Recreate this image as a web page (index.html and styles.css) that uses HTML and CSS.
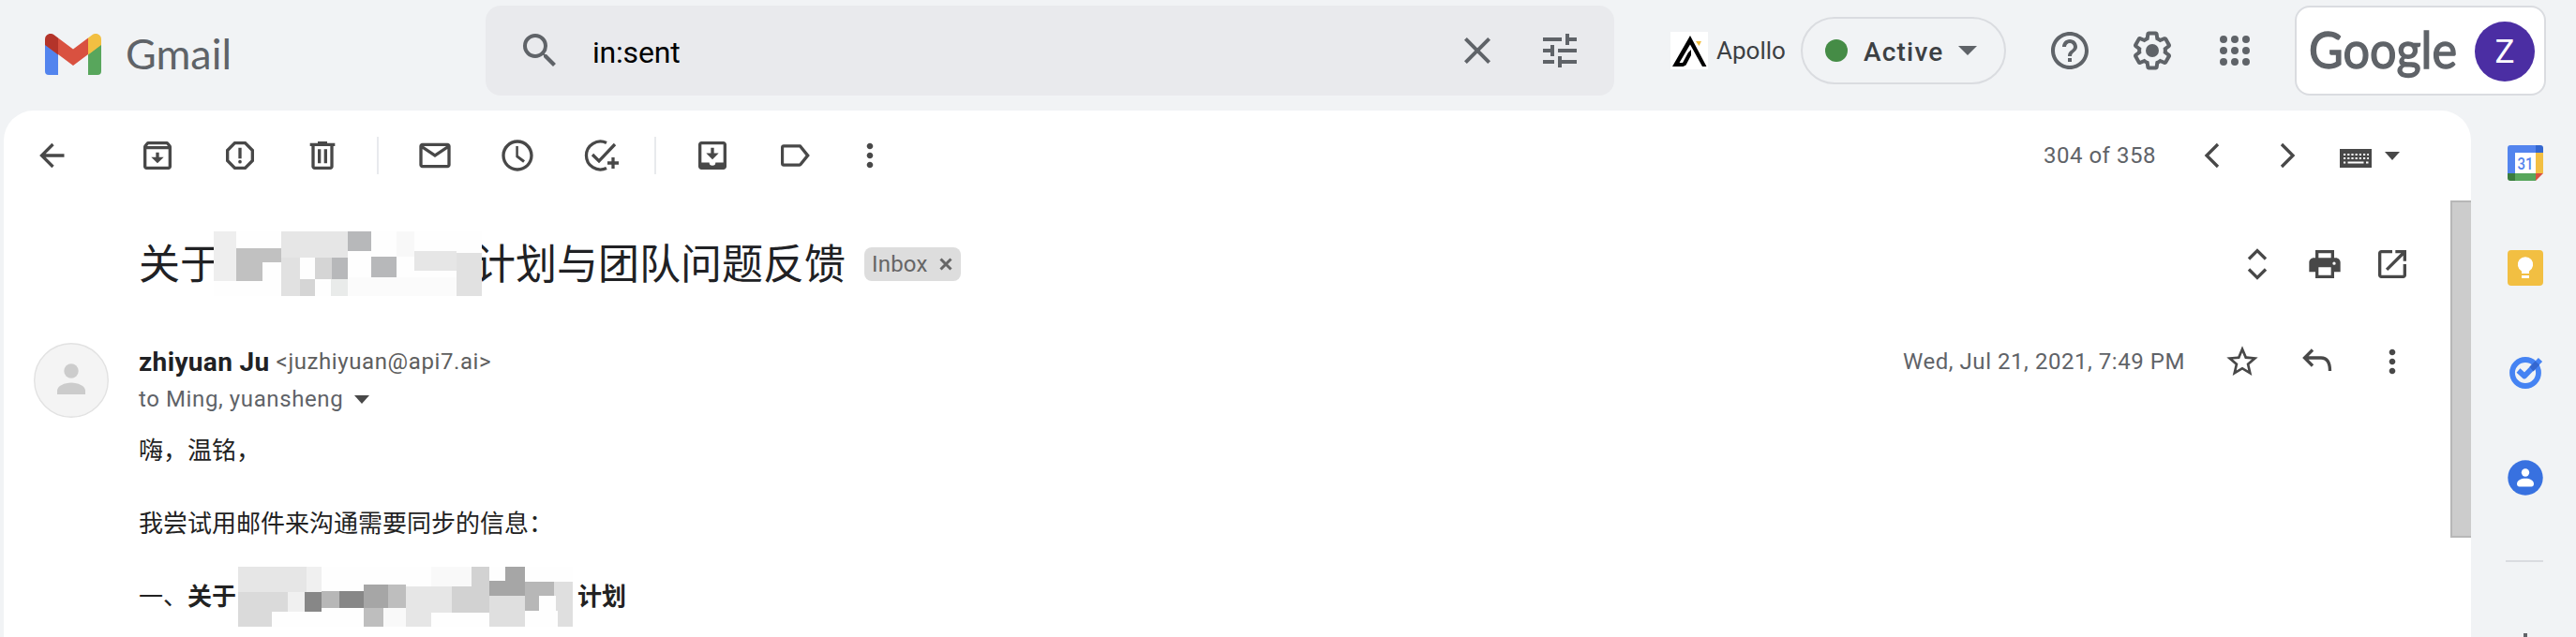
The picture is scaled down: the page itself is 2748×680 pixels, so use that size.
FILE: index.html
```html
<!DOCTYPE html>
<html lang="en">
<head>
<meta charset="utf-8">
<title>Gmail</title>
<link rel="stylesheet" href="styles.css">
</head>
<body>
<header class="header">
  <svg class="gmail-mark" viewBox="0 0 60 44">
    <path fill="#5384ee" d="M0 11L14 22V44H4a4 4 0 0 1-4-4z"/>
    <path fill="#58a65c" d="M60 11L46 22V44h10a4 4 0 0 0 4-4z"/>
    <path fill="#b4342a" d="M0 12V6C0 .8 5.500-1.800 10 1.500l4 3V22.500z"/>
    <path fill="#f2bf42" d="M60 12V6C60 .8 54.500-1.800 50 1.500l-4 3V22.500z"/>
    <path fill="#d95140" d="M14 4.500l16 12 16-12v17.500L30 34 14 22z"/>
  </svg>
  <svg class="gmail-word" viewBox="0 0 120 60"><text x="1" y="46" textLength="113" lengthAdjust="spacingAndGlyphs">Gmail</text></svg>
  <div class="search">
    <svg class="i48" viewBox="0 0 24 24"><path d="M15.500 14h-.79l-.28-.27A6.470 6.470 0 0 0 16 9.500 6.500 6.500 0 1 0 9.500 16c1.610 0 3.090-.59 4.230-1.570l.27.28v.79l5 4.990L20.490 19l-4.990-5zm-6 0C7.010 14 5 11.990 5 9.500S7.010 5 9.500 5 14 7.010 14 9.500 11.990 14 9.500 14z"/></svg>
    <span class="query">in:sent</span>
    <svg class="i48" viewBox="0 0 24 24"><path d="M19 6.410L17.590 5 12 10.590 6.410 5 5 6.410 10.590 12 5 17.590 6.410 19 12 13.410 17.590 19 19 17.590 13.410 12z"/></svg>
    <svg class="i48 tune" viewBox="0 0 24 24"><path d="M3 17v2h6v-2H3zM3 5v2h10V5H3zm10 16v-2h8v-2h-8v-2h-2v6h2zM7 9v2H3v2h4v2h2V9H7zm14 4v-2H11v2h10zm-6-4h2V7h4V5h-4V3h-2v6z"/></svg>
  </div>
  <svg class="apollo-mark" viewBox="0 0 40 40">
    <path fill="#fff" d="M0 0h40v40H0z"/>
    <path d="M21 4L38.500 37h-4.500L21 13.500 9.500 33H13l6-11 3-3v6l-5.500 10.500-3 1.500H2z"/>
    <path fill="#f2bf42" d="M27 10h6l-2.500 5z"/>
  </svg>
  <span class="apollo">Apollo</span>
  <div class="status"><i class="dot"></i><span class="active">Active</span><svg class="caret" viewBox="0 0 20 10"><path d="M0 0h20L10 10z"/></svg></div>
  <div class="apps">
    <svg class="i48" viewBox="0 0 24 24"><path d="M11 18h2v-2h-2v2zm1-16C6.480 2 2 6.480 2 12s4.480 10 10 10 10-4.480 10-10S17.520 2 12 2zm0 18c-4.410 0-8-3.590-8-8s3.590-8 8-8 8 3.590 8 8-3.590 8-8 8zm0-14c-2.210 0-4 1.790-4 4h2c0-1.100.9-2 2-2s2 .9 2 2c0 2-3 1.750-3 5h2c0-2.250 3-2.500 3-5 0-2.210-1.790-4-4-4z"/></svg>
    <svg class="i48" viewBox="0 0 24 24"><path d="M13.850 22.250h-3.700c-.74 0-1.360-.54-1.450-1.270l-.27-1.890c-.27-.14-.53-.29-.79-.46l-1.800.72c-.7.26-1.470-.03-1.810-.65L2.200 15.530c-.35-.66-.2-1.440.36-1.880l1.530-1.190c-.01-.15-.02-.3-.02-.46 0-.15.010-.31.020-.46l-1.520-1.190c-.59-.45-.74-1.260-.37-1.880l1.850-3.190c.34-.62 1.110-.9 1.790-.63l1.810.73c.26-.17.520-.32.780-.46l.27-1.910c.09-.7.710-1.250 1.440-1.250h3.700c.74 0 1.360.54 1.450 1.270l.27 1.890c.27.14.53.29.79.46l1.800-.72c.71-.26 1.480.03 1.820.65l1.840 3.180c.36.66.2 1.440-.36 1.880l-1.520 1.190c.01.15.02.3.02.46s-.01.31-.02.46l1.520 1.190c.56.45.72 1.230.37 1.860l-1.860 3.220c-.34.62-1.110.9-1.800.63l-1.800-.72c-.26.17-.52.32-.78.46l-.27 1.910c-.1.680-.72 1.220-1.460 1.220zm-3.230-2h2.760l.37-2.550.53-.22c.44-.18.88-.44 1.340-.78l.45-.34 2.380.96 1.380-2.400-2.030-1.580.07-.56c.03-.26.06-.51.06-.78s-.03-.53-.06-.78l-.07-.56 2.030-1.580-1.390-2.400-2.390.96-.45-.35c-.42-.32-.87-.58-1.330-.77l-.52-.22-.37-2.550h-2.760l-.37 2.550-.53.210c-.44.190-.88.440-1.340.79l-.45.330-2.380-.95-1.390 2.390 2.030 1.580-.07.56a7 7 0 0 0-.06.790c0 .260.020.530.060.780l.07.560-2.030 1.580 1.380 2.400 2.390-.96.450.350c.43.330.860.580 1.330.77l.53.220.38 2.550z"/><circle cx="12" cy="12" r="3.500"/></svg>
    <svg class="i48" viewBox="0 0 24 24"><path d="M6 8a2 2 0 1 0 0-4 2 2 0 0 0 0 4zm6 0a2 2 0 1 0 0-4 2 2 0 0 0 0 4zm6 0a2 2 0 1 0 0-4 2 2 0 0 0 0 4zM6 14a2 2 0 1 0 0-4 2 2 0 0 0 0 4zm6 0a2 2 0 1 0 0-4 2 2 0 0 0 0 4zm6 0a2 2 0 1 0 0-4 2 2 0 0 0 0 4zM6 20a2 2 0 1 0 0-4 2 2 0 0 0 0 4zm6 0a2 2 0 1 0 0-4 2 2 0 0 0 0 4zm6 0a2 2 0 1 0 0-4 2 2 0 0 0 0 4z"/></svg>
  </div>
  <div class="account">
    <svg class="google-word" viewBox="0 0 160 70"><text x="-1" y="53" textLength="158" lengthAdjust="spacingAndGlyphs">Google</text></svg>
    <span class="me">Z</span>
  </div>
</header>

<div class="main">
  <main class="card">
    <div class="toolbar">
      <svg class="i40 back" viewBox="0 0 40 40"><path class="line" d="M32.500 20H9M20.500 8L8.500 20l12 12"/></svg>
      <svg class="i40" viewBox="0 0 24 24"><path d="M20.540 5.230l-1.390-1.680C18.880 3.210 18.470 3 18 3H6c-.47 0-.88.21-1.160.55L3.460 5.230C3.170 5.570 3 6.020 3 6.500V19c0 1.100.9 2 2 2h14c1.100 0 2-.9 2-2V6.500c0-.48-.17-.93-.46-1.270zM6.240 5h11.520l.83 1H5.420l.82-1zM5 19V8h14v11H5zm8-9h-2v3H8l4 4 4-4h-3z"/></svg>
      <svg class="i40" viewBox="0 0 24 24"><path d="M15.730 3H8.270L3 8.270v7.460L8.270 21h7.460L21 15.730V8.270L15.730 3zM19 14.900L14.900 19H9.100L5 14.900V9.100L9.100 5h5.800L19 9.100v5.800zM11 7h2v7h-2z"/><circle cx="12" cy="16" r="1.100"/></svg>
      <svg class="i40" viewBox="0 0 24 24"><path d="M15 4V3H9v1H4v2h1v13c0 1.100.9 2 2 2h10c1.100 0 2-.9 2-2V6h1V4h-5zm2 15H7V6h10v13zM9 8h2v9H9zm4 0h2v9h-2z"/></svg>
      <i class="sep"></i>
      <svg class="i40" viewBox="0 0 24 24"><path d="M20 4H4c-1.100 0-2 .9-2 2v12c0 1.100.9 2 2 2h16c1.100 0 2-.9 2-2V6c0-1.100-.9-2-2-2zm-.8 2L12 10.800 4.800 6h14.400zM4 18V7.870l8 5.330 8-5.330V18H4z"/></svg>
      <svg class="i40" viewBox="0 0 24 24"><path d="M12 2C6.500 2 2 6.500 2 12s4.500 10 10 10 10-4.500 10-10S17.500 2 12 2zm0 18c-4.410 0-8-3.590-8-8s3.590-8 8-8 8 3.590 8 8-3.590 8-8 8zm.5-14H11v7l4.700 3.600 1.100-1.500-4.300-3.100z"/></svg>
      <svg class="i40" viewBox="0 0 40 40"><path class="line" d="M27 6.500A15 15 0 1 0 27 33.500M12 19l7 7L36 8M34 22v12M28 28h12"/></svg>
      <i class="sep"></i>
      <svg class="i40" viewBox="0 0 24 24"><path d="M19 3H5c-1.100 0-2 .9-2 2v14c0 1.100.9 2 2 2h14c1.100 0 2-.9 2-2V5c0-1.100-.9-2-2-2zm0 13.500h-5a2 2 0 0 1-4 0H5V5h14v11.500zM16 10.500h-3V7h-2v3.500H8l4 4z"/></svg>
      <svg class="i40" viewBox="0 0 24 24"><path d="M16.500 5.800C16.140 5.310 15.600 5 15 5H4.800c-1 0-1.800.8-1.800 1.800v10.400c0 1 .8 1.800 1.800 1.800H15c.6 0 1.140-.31 1.500-.8L21.500 12l-5-6.200zM14.800 17.100H4.900V6.900h9.900L18.900 12l-4.100 5.100z"/></svg>
      <svg class="i40 more" viewBox="0 0 24 24"><path d="M12 8c1.100 0 2-.9 2-2s-.9-2-2-2-2 .9-2 2 .9 2 2 2zm0 2c-1.100 0-2 .9-2 2s.9 2 2 2 2-.9 2-2-.9-2-2-2zm0 6c-1.100 0-2 .9-2 2s.9 2 2 2 2-.9 2-2-.9-2-2-2z"/></svg>
      <span class="count">304 of 358</span>
      <svg class="i40 prev" viewBox="0 0 40 40"><path class="line" d="M26 8L14 20l12 12"/></svg>
      <svg class="i40 next" viewBox="0 0 40 40"><path class="line" d="M14 8l12 12-12 12"/></svg>
      <svg class="keyboard" viewBox="0 0 34 20"><path d="M0 0h34v20H0z"/><path class="keys" d="M4 6h27M4 10h27" stroke-dasharray="2.200 2"/><path class="keys" d="M4 14.500h2.200M8.500 14.500h17M28 14.500h2.500"/></svg>
      <svg class="kcaret" viewBox="0 0 16 9"><path d="M0 0h16L8 9z"/></svg>
    </div>

    <div class="pane">
      <article class="mail">
        <div class="subject">
          <h1>关于</h1>
          <svg class="mosaic-a" viewBox="0 0 286 69" shape-rendering="crispEdges">
            <path fill="#fefefe" d="M0 0h286v69H0z"/>
            <path fill="#eee" d="M0 0h24v53H0z"/>
            <path fill="#c1c1c1" d="M24 18h48v15H52v20H24z"/>
            <path fill="#e6e6e6" d="M72 0h71v28H72zM214 21h45v21h-45z"/>
            <path fill="#e1e1e1" d="M72 28h20v41H72zM259 23h27v46h-27z"/>
            <path fill="#d5d5d5" d="M92 51h16v18H92zM108 28h18v23h-18z"/>
            <path fill="#b7b8ba" d="M126 28h17v23h-17zM143 0h25v21h-25zM168 27h27v22h-27z"/>
            <path fill="#e9ebea" d="M125 51h18v18h-18z"/>
            <path fill="#f8f8f8" d="M195 0h19v27h-19z"/>
            <path fill="#fbfbfb" d="M143 49h116v20H143z"/>
          </svg>
          <h1>计划与团队问题反馈</h1>
          <span class="chip">Inbox<svg viewBox="0 0 14 14"><path d="M1.500 1.500l11 11M12.500 1.500l-11 11"/></svg></span>
          <div class="actions">
            <svg class="i40" viewBox="0 0 40 40"><path class="line" d="M11 14.500l9-9 9 9M11 25.500l9 9 9-9"/></svg>
            <svg class="i40" viewBox="0 0 24 24"><path d="M19 8h-1V3H6v5H5c-1.660 0-3 1.340-3 3v6h4v4h12v-4h4v-6c0-1.660-1.340-3-3-3zM8 5h8v3H8V5zm8 14H8v-5h8v5zm2-6.500a1 1 0 1 1 0-2 1 1 0 0 1 0 2z"/></svg>
            <svg class="i40" viewBox="0 0 24 24"><path d="M19 19H5V5h7V3H5c-1.110 0-2 .9-2 2v14c0 1.100.89 2 2 2h14c1.100 0 2-.9 2-2v-7h-2v7zM14 3v2h3.590l-9.830 9.830 1.410 1.410L19 6.410V10h2V3h-7z"/></svg>
          </div>
        </div>
        <div class="message">
          <svg class="avatar" viewBox="0 0 80 80"><circle cx="40" cy="40" r="39.300" fill="#f4f4f4" stroke="#e2e2e2" stroke-width="1.400"/><circle cx="40" cy="30" r="7.700"/><path d="M25 55v-4c0-5 8-8.500 15-8.500S55 46 55 51v4z"/></svg>
          <div class="content">
            <div class="sender">
              <div class="line1">
                <span class="name">zhiyuan Ju</span><span class="email">&lt;juzhiyuan@api7.ai&gt;</span>
                <span class="date">Wed, Jul 21, 2021, 7:49 PM</span>
                <svg class="i40 star" viewBox="0 0 24 24"><path d="M22 9.240l-7.190-.62L12 2 9.190 8.630 2 9.240l5.460 4.730L5.820 21 12 17.270 18.180 21l-1.630-7.030L22 9.240zM12 15.400l-3.760 2.270 1-4.280-3.320-2.880 4.380-.38L12 6.100l1.710 4.040 4.380.38-3.320 2.880 1 4.280L12 15.400z"/></svg>
                <svg class="i40" viewBox="0 0 40 40"><path class="line" d="M15 7.500L6.500 16l8.500 8.500M7 16h17c7 0 9.500 5 9.500 14"/></svg>
                <svg class="i40" viewBox="0 0 24 24"><path d="M12 8c1.100 0 2-.9 2-2s-.9-2-2-2-2 .9-2 2 .9 2 2 2zm0 2c-1.100 0-2 .9-2 2s.9 2 2 2 2-.9 2-2-.9-2-2-2zm0 6c-1.100 0-2 .9-2 2s.9 2 2 2 2-.9 2-2-.9-2-2-2z"/></svg>
              </div>
              <div class="line2"><span class="to">to Ming, yuansheng</span><svg class="kcaret" viewBox="0 0 16 9"><path d="M0 0h16L8 9z"/></svg></div>
            </div>
            <p>嗨，温铭，</p>
            <p>我尝试用邮件来沟通需要同步的信息：</p>
            <p class="topic">一、<b>关于</b><svg class="mosaic-b" viewBox="0 0 357 64" shape-rendering="crispEdges">
              <path fill="#fefefe" d="M0 0h357v64H0z"/>
              <path fill="#e6e6e6" d="M0 0h73v27H0zM179 21h49v28h-22v15h-27z"/>
              <path fill="#f0f0f0" d="M73 0h16v27H73zM53 27h18v21H53z"/>
              <path fill="#dadada" d="M0 27h53v21H36v16H0z"/>
              <path fill="#878787" d="M71 27h18v21H71zM108 26h26v18h-26z"/>
              <path fill="#b7b7b7" d="M89 26h19v18H89zM306 16h31v15h-16v16h-15z"/>
              <path fill="#a6a6a6" d="M134 19h26v25h-26zM285 0h21v31h-38V15h17z"/>
              <path fill="#bebebe" d="M160 19h19v25h-19zM134 44h21v20h-21z"/>
              <path fill="#f9f9f9" d="M155 44h24v20h-24zM206 0h43v21h-43z"/>
              <path fill="#d2d2d2" d="M249 0h19v49h-40V21h21z"/>
              <path fill="#dfdfdf" d="M268 31h38v33h-38zM337 16h20v48h-16V47h-2V31h-2z"/>
            </svg><b>计划</b></p>
          </div>
        </div>
      </article>
      <div class="track"><div class="thumb"></div></div>
    </div>
  </main>

  <aside class="side">
    <svg viewBox="0 0 38 38"><path fill="#5384ee" d="M3 0h28v8H8v22H0V3a3 3 0 0 1 3-3z"/><path fill="#3467d0" d="M30 0h5a3 3 0 0 1 3 3v5h-8z"/><path fill="#f2bf42" d="M30 8h8v22h-8z"/><path fill="#58a65c" d="M8 30h22v8H8z"/><path fill="#3a7d3e" d="M0 30h8v8H3a3 3 0 0 1-3-3z"/><path fill="#d95140" d="M30 30h8l-8 8z"/><path fill="#fff" d="M8 8h22v22H8z"/><text x="10.500" y="25.500" textLength="17" lengthAdjust="spacingAndGlyphs" class="day">31</text></svg>
    <svg viewBox="0 0 38 38"><rect width="38" height="38" rx="4" fill="#f2bf42"/><path fill="#fff" d="M15 25v-2.500a8.200 8.200 0 1 1 8 0V25zM15 27h8v3h-8z"/></svg>
    <svg viewBox="0 0 38 38"><g fill="none" stroke="#4583f3" stroke-width="5.800"><circle cx="19" cy="19" r="14"/><path stroke-linejoin="round" d="M11.500 16.500l6.500 6L35 5"/></g><path fill="#3467d0" d="M23.500 12.500l6-6 4.500 4-6.500 7z"/></svg>
    <svg viewBox="0 0 38 38"><circle cx="19" cy="19" r="18.700" fill="#3871e0"/><circle cx="19" cy="13.500" r="4.200" fill="#fff"/><path fill="#fff" d="M10 25.500c0-4 4.500-5.800 9-5.800s9 1.800 9 5.800c0 2-1 3-2.500 3h-13c-1.500 0-2.500-1-2.500-3z"/></svg>
    <i class="rule"></i>
    <i class="plus"></i>
  </aside>
</div>
</body>
</html>
```

FILE: styles.css
```css
* { box-sizing: border-box; }
body {
  margin: 0;
  width: 2748px;
  height: 680px;
  overflow: hidden;
  background: #f1f3f5;
  color: #202124;
  font-family: Roboto, "Noto Sans CJK SC", sans-serif;
}
svg { display: block; flex: none; overflow: visible; }
i { display: block; flex: none; }
.i48 { width: 48px; height: 48px; fill: #5f6368; }
.i40 { width: 40px; height: 40px; fill: #484848; }
.line { fill: none; stroke: #484848; stroke-width: 3.3; }

/* header */
.header { display: flex; align-items: center; height: 108px; margin-bottom: 10px; white-space: nowrap; }
.gmail-mark { width: 60px; height: 44px; margin: 8px 0 0 48px; }
.gmail-word { width: 120px; height: 60px; margin: 8px 0 0 25px; }
.gmail-word text { font: 44px Lato, sans-serif; fill: #5f6368; }
.search {
  display: flex; align-items: center;
  width: 1204px; height: 96px; margin-left: 265px; padding: 0 34px;
  border-radius: 16px; background: #e9eaed;
}
.query { flex: 1; padding: 3px 0 0 32px; color: #000; font-size: 32px; letter-spacing: -.2px; }
.tune { margin-left: 40px; }
.apollo-mark { width: 40px; height: 40px; margin-left: 60px; }
.apollo { width: 90px; padding-left: 9px; color: #3c4043; font-size: 26px; }
.status {
  display: flex; align-items: center;
  width: 219px; height: 72px; margin-left: 9px; padding-left: 24px;
  border: 2px solid #dadce0; border-radius: 36px;
}
.dot { width: 24px; height: 24px; border-radius: 50%; background: #458c46; }
.active { width: 118px; padding: 2px 0 0 17px; color: #3c4043; font-size: 28px; font-weight: 500; letter-spacing: 1.200px; }
.caret { width: 20px; height: 10px; fill: #5f6368; }
.apps { display: flex; gap: 40px; margin-left: 44px; }
.account {
  display: flex; align-items: center; justify-content: space-between;
  width: 268px; height: 96px; margin-left: 40px; padding: 2px 10px 0 14px;
  border: 2px solid #dadce0; border-radius: 16px; background: #fff;
}
.google-word { width: 160px; height: 70px; }
.google-word text { font: 55px Lato, sans-serif; fill: #5f6368; stroke: #5f6368; stroke-width: 1.4; }
.me {
  width: 64px; height: 64px; border-radius: 50%;
  background: #4b2ea3; color: #fff; font-size: 35px; line-height: 66px; text-align: center;
}

/* card */
.main { display: flex; height: 562px; }
.card { width: 2632px; margin-left: 4px; border-radius: 32px 32px 0 0; background: #fff; overflow: hidden; }
.toolbar { display: flex; align-items: center; gap: 48px; height: 96px; padding-left: 32px; }
.back { margin-right: 24px; }
.sep { width: 2px; height: 40px; margin: 0 -8px 0 -10px; background: #e8eaed; }
.more { margin-left: -8px; }
.count { width: 122px; margin-left: auto; margin-right: -10px; color: #5f6368; font-size: 24px; letter-spacing: .5px; white-space: nowrap; }
.next { margin-left: -8px; }
.keyboard { width: 34px; height: 20px; margin: 6px 0 0 -12px; fill: #484848; }
.keys { stroke: #fff; stroke-width: 2; }
.kcaret { width: 16px; height: 9px; fill: #484848; }
.toolbar .kcaret { margin: 1px 76px 0 -34px; }

.pane { display: flex; height: 466px; }
.mail { flex: 1; padding-left: 32px; }
.track { width: 22px; }
.thumb { height: 360px; border: 2px solid #b7b7b7; border-right: 0; background: #ccc; }

.subject { display: flex; align-items: center; height: 134px; padding-left: 112px; }
.subject h1 { margin: 0; padding-top: 3px; font-size: 44px; font-weight: 400; line-height: 64px; white-space: nowrap; }
.mosaic-a { position: relative; width: 286px; height: 69px; margin: 0 -8px; }
.chip {
  display: flex; align-items: center; gap: 12px;
  width: 103px; height: 36px; margin: 2px 0 0 20px; padding-left: 8px;
  border-radius: 8px; background: #ddd; color: #666; font-size: 24px; letter-spacing: .2px;
}
.chip svg { width: 14px; height: 14px; stroke: #666; stroke-width: 3; }
.actions { display: flex; gap: 32px; margin: 2px 42px 0 auto; }

.message { display: flex; gap: 32px; }
.avatar { width: 80px; height: 80px; margin-top: 18px; fill: #ccc; }
.content { flex: 1; }
.sender { height: 92px; padding-top: 18px; }
.line1 { display: flex; align-items: center; height: 40px; padding-right: 42px; }
.name { font-size: 28px; font-weight: 700; letter-spacing: .35px; }
.email { padding: 0 0 0 7px; color: #5e5e5e; font-size: 24px; letter-spacing: .6px; }
.date { margin-left: auto; padding-right: 41px; color: #5f6368; font-size: 24px; letter-spacing: .55px; }
.star { margin-right: 40px; }
.line1 .i40:last-child { margin-left: 40px; }
.line2 { display: flex; align-items: center; height: 40px; }
.to { width: 230px; color: #5f6368; font-size: 24px; letter-spacing: .6px; }
p { margin: 0; height: 78px; color: #222; font-family: "Noto Sans CJK SC", sans-serif; font-size: 26px; line-height: 78px; }
.topic { display: flex; align-items: center; }
.mosaic-b { width: 357px; height: 64px; margin: 4px 5px 0 2px; }

/* side panel */
.side { display: flex; flex-direction: column; gap: 74px; width: 112px; padding: 37px 0 0 39px; }
.side svg { width: 38px; height: 38px; }
.day { font: 500 18px Roboto, sans-serif; fill: #5384ee; }
.rule { width: 40px; height: 2px; margin: -5px 0 0 -2px; background: #dadce0; }
.plus { width: 4px; height: 24px; margin: 2px 0 0 17px; background: #5f6368; }
```
